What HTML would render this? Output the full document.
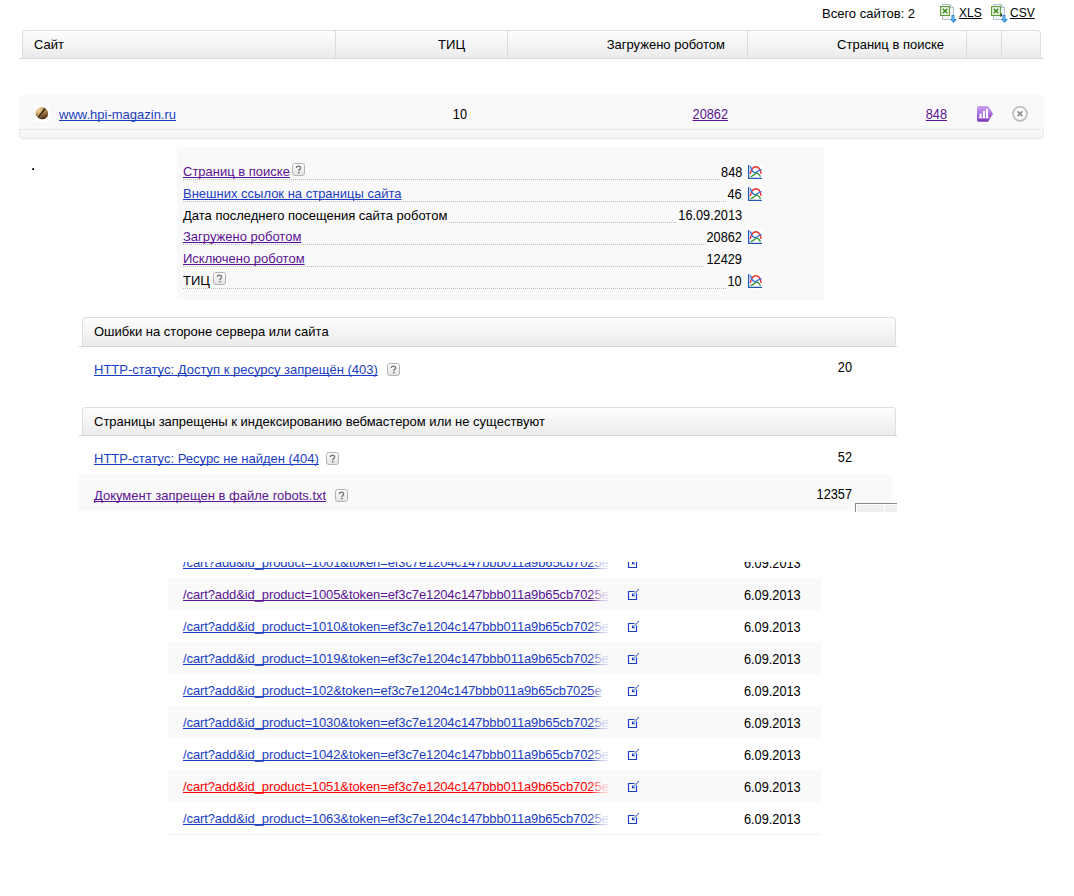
<!DOCTYPE html>
<html><head><meta charset="utf-8">
<style>
*{margin:0;padding:0;box-sizing:border-box}
html,body{width:1074px;height:896px;overflow:hidden;background:#fff}
body{position:relative;font-family:"Liberation Sans",sans-serif;font-size:13px;color:#000}
.a{position:absolute}
.t{position:absolute;line-height:15px;white-space:nowrap}
.r{text-align:right}
.d{font-size:14px;transform:scaleX(0.91);transform-origin:0 0}
.d.r{transform-origin:100% 0}
.u{text-decoration:underline;text-decoration-skip-ink:none}
.bl{color:#1a3dc1}
.pu{color:#5b1494}
.rd{color:#f00}
.hdr{position:absolute;background:linear-gradient(#fdfdfd,#ebebeb);border:1px solid #dedede;border-bottom:none;border-radius:4px 4px 0 0}
.hline{position:absolute;height:1px;background:#d3d3d3}
.dv{position:absolute;width:1px;background:#dcdcdc}
.q{position:absolute;width:13px;height:13px;border:1px solid #b9b9b9;border-radius:3px;background:linear-gradient(#fff,#e4e4e4);}
.q:after{content:"?";position:absolute;left:0;top:0;width:11px;text-align:center;font-size:9px;line-height:11px;font-weight:bold;color:#6a6a6a}
.dot{position:absolute;height:1px;background-image:linear-gradient(to right,#bdbdbd 50%,transparent 50%);background-size:2px 1px}
</style></head><body>
<div class="t " style="left:822px;top:6px;">Всего сайтов: 2</div>
<svg class="a" style="left:940px;top:3px" width="18" height="21" viewBox="0 0 18 21">
 <path d="M2.5 1.5h8l3 3v12h-11z" fill="#f1f5f7" stroke="#b5c3c8"/>
 <path d="M10.5 1.5v3h3" fill="#fff" stroke="#a9b8bf"/>
 <rect x="0.6" y="3.6" width="8.8" height="8.8" fill="#f4faf0" stroke="#5a9a32" stroke-width="1.1"/>
 <path d="M2.7 5.7l4.6 4.6M7.3 5.7l-4.6 4.6" stroke="#3f8a24" stroke-width="1.6"/>
 
 <path d="M13 12v5" stroke="#2e86d8" stroke-width="3"/>
 <path d="M10 16h7l-3.5 4z" fill="#2e86d8"/>
 <path d="M13 13v5" stroke="#7fd0ff" stroke-width="1"/>
</svg>
<div class="t u" style="left:959px;top:6px;font-size:12px">XLS</div>
<svg class="a" style="left:991px;top:3px" width="18" height="21" viewBox="0 0 18 21">
 <path d="M2.5 1.5h8l3 3v12h-11z" fill="#f1f5f7" stroke="#b5c3c8"/>
 <path d="M10.5 1.5v3h3" fill="#fff" stroke="#a9b8bf"/>
 <rect x="0.6" y="3.6" width="8.8" height="8.8" fill="#f4faf0" stroke="#5a9a32" stroke-width="1.1"/>
 <path d="M2.7 5.7l4.6 4.6M7.3 5.7l-4.6 4.6" stroke="#3f8a24" stroke-width="1.6"/>
 <path d="M10.5 10.5v1.5l-1 1.5" stroke="#222" stroke-width="1.3" fill="none"/>
 <path d="M13 12v5" stroke="#2e86d8" stroke-width="3"/>
 <path d="M10 16h7l-3.5 4z" fill="#2e86d8"/>
 <path d="M13 13v5" stroke="#7fd0ff" stroke-width="1"/>
</svg>
<div class="t u" style="left:1010px;top:6px;font-size:12px">CSV</div>
<div class="hdr" style="left:22px;top:30px;width:1019px;height:28px"></div>
<div class="a" style="left:19px;top:58px;width:1025px;height:1px;background:#d9d9d9"></div>
<div class="a" style="left:335px;top:31px;width:1px;height:27px;background:#dcdcdc"></div>
<div class="a" style="left:507px;top:31px;width:1px;height:27px;background:#dcdcdc"></div>
<div class="a" style="left:747px;top:31px;width:1px;height:27px;background:#dcdcdc"></div>
<div class="a" style="left:966px;top:31px;width:1px;height:27px;background:#dcdcdc"></div>
<div class="a" style="left:1001px;top:31px;width:1px;height:27px;background:#dcdcdc"></div>
<div class="t " style="left:34px;top:37px;">Сайт</div>
<div class="t r " style="left:65px;width:400px;top:37px;">ТИЦ</div>
<div class="t r " style="left:325px;width:400px;top:37px;">Загружено роботом</div>
<div class="t r " style="left:544px;width:400px;top:37px;">Страниц в поиске</div>
<div class="a" style="left:19px;top:95px;width:1025px;height:35px;background:#f9f9f9"></div>
<div class="a" style="left:19px;top:129px;width:1025px;height:10px;border:1px solid #e6e6e6;border-radius:0 0 4px 4px;background:linear-gradient(#f9f9f9,#f6f6f6)"></div>
<div class="a" style="left:34px;top:106px;width:16px;height:16px;background:#fff"></div>
<svg class="a" style="left:34px;top:106px" width="16" height="16" viewBox="0 0 16 16">
 <defs><radialGradient id="cg" cx="0.35" cy="0.3" r="0.75"><stop offset="0" stop-color="#f3d7a0"/><stop offset="0.6" stop-color="#c39a5c"/><stop offset="1" stop-color="#8a6535"/></radialGradient>
 <linearGradient id="cg2" x1="0" y1="0" x2="0.3" y2="1"><stop offset="0" stop-color="#d8b070"/><stop offset="0.5" stop-color="#a27a45"/><stop offset="1" stop-color="#4e3218"/></linearGradient></defs>
 <path d="M1.6 8.2C1.4 4.3 4.2 1.2 8 1.2c1.5 0 2.6 0.4 3.2 0.9L4.6 11.2C2.8 10.6 1.7 9.6 1.6 8.2z" fill="url(#cg)"/>
 <path d="M11.6 2.6c1.6 1 2.6 3 2.5 5.4-0.2 3.2-2.8 5.3-5.9 5.3-1.5 0-2.8-0.5-3.4-1.1z" fill="url(#cg2)"/>
 <path d="M10.8 3L4.6 11" stroke="#3a2614" stroke-width="1.7" stroke-linecap="round"/>
</svg>
<div class="t u bl" style="left:59px;top:107px;">www.hpi-magazin.ru</div>
<div class="t d r " style="left:67px;width:400px;top:107px;">10</div>
<div class="t d r u pu" style="left:328px;width:400px;top:107px;">20862</div>
<div class="t d r u pu" style="left:547px;width:400px;top:107px;">848</div>
<svg class="a" style="left:977px;top:106px" width="17" height="16" viewBox="0 0 17 16">
 <defs><linearGradient id="pg" x1="0" y1="0" x2="0" y2="1"><stop offset="0" stop-color="#cda3f3"/><stop offset="0.7" stop-color="#9a55d0"/><stop offset="1" stop-color="#7a32b0"/></linearGradient></defs>
 <path d="M2 0h9l5 7.8-5 8H2a2 2 0 0 1-2-2V2a2 2 0 0 1 2-2z" fill="url(#pg)"/>
 <path d="M1.5 11.8h10.5" stroke="#fff" stroke-width="1"/>
 <path d="M3.5 11.5V7.5M6.9 11.5V5M10 11.5V3" stroke="#fff" stroke-width="2.1"/>
</svg>
<svg class="a" style="left:1012px;top:106px" width="16" height="16" viewBox="0 0 16 16">
 <circle cx="8" cy="7.8" r="7" fill="#fcfcfc" stroke="#c0c0c0" stroke-width="1.8"/>
 <path d="M5.6 5.4l4.8 4.8M10.4 5.4l-4.8 4.8" stroke="#939393" stroke-width="1.8"/>
</svg>
<div class="a" style="left:32px;top:168px;width:2px;height:2px;background:radial-gradient(circle at 70% 70%,#000 30%,#999 80%)"></div>
<div class="a" style="left:177px;top:147px;width:647px;height:153px;background:#f9f9f9"></div>
<div class="dot" style="left:183px;top:179px;width:559px"></div>
<div class="dot" style="left:183px;top:201px;width:559px"></div>
<div class="dot" style="left:183px;top:222px;width:559px"></div>
<div class="dot" style="left:183px;top:244px;width:559px"></div>
<div class="dot" style="left:183px;top:266px;width:559px"></div>
<div class="dot" style="left:183px;top:288px;width:559px"></div>
<div class="t u pu" style="left:183px;top:164px;">Страниц в поиске</div>
<div class="t d r " style="left:342px;width:400px;top:165px;background:#f9f9f9;padding-left:1px;width:auto;left:auto;right:332px;height:15px">848</div>
<svg class="a" style="left:747px;top:164px" width="16" height="16" viewBox="0 0 16 16">
 <rect width="16" height="16" fill="#fff"/>
 <path d="M1.6 1v13.4H15" fill="none" stroke="#2558b5" stroke-width="1.3"/>
 <path d="M3.2 10C4 6 6 2.7 8.7 2.7c2.8 0 4.8 2.4 5.5 7.3" fill="none" stroke="#f03030" stroke-width="1.4"/>
 <path d="M3.3 2.4C4.5 6 6 8.6 7.8 8.6c2.2 0 4.2-3 6.9-3" fill="none" stroke="#2a6ae0" stroke-width="1.4"/>
 <path d="M3.5 12.6C6 12.2 8 9.3 10 9.3c1.8 0 2.8 2.2 3.6 3.4" fill="none" stroke="#3a9a3a" stroke-width="1.4"/>
</svg>
<svg class="a" style="left:292px;top:163px" width="13" height="13" viewBox="0 0 13 13"><defs><linearGradient id="qg292" x1="0" y1="0" x2="0" y2="1"><stop offset="0" stop-color="#fff"/><stop offset="1" stop-color="#e2e2e2"/></linearGradient></defs><rect x="0.5" y="0.5" width="12" height="12" rx="2.2" fill="url(#qg292)" stroke="#b4b4b4"/><path d="M4.4 5C4.4 3.8 5.3 3.1 6.5 3.1S8.6 3.8 8.6 5C8.6 6.4 6.8 6.4 6.8 8" fill="none" stroke="#707070" stroke-width="1.3"/><circle cx="6.8" cy="9.6" r="0.85" fill="#707070"/></svg>
<div class="t u bl" style="left:183px;top:186px;">Внешних ссылок на страницы сайта</div>
<div class="t d r " style="left:342px;width:400px;top:187px;background:#f9f9f9;padding-left:1px;width:auto;left:auto;right:332px;height:15px">46</div>
<svg class="a" style="left:747px;top:186px" width="16" height="16" viewBox="0 0 16 16">
 <rect width="16" height="16" fill="#fff"/>
 <path d="M1.6 1v13.4H15" fill="none" stroke="#2558b5" stroke-width="1.3"/>
 <path d="M3.2 10C4 6 6 2.7 8.7 2.7c2.8 0 4.8 2.4 5.5 7.3" fill="none" stroke="#f03030" stroke-width="1.4"/>
 <path d="M3.3 2.4C4.5 6 6 8.6 7.8 8.6c2.2 0 4.2-3 6.9-3" fill="none" stroke="#2a6ae0" stroke-width="1.4"/>
 <path d="M3.5 12.6C6 12.2 8 9.3 10 9.3c1.8 0 2.8 2.2 3.6 3.4" fill="none" stroke="#3a9a3a" stroke-width="1.4"/>
</svg>
<div class="t " style="left:183px;top:208px;background:#f9f9f9;padding-right:1px;height:16px">Дата последнего посещения сайта роботом</div>
<div class="t d r " style="left:342px;width:400px;top:208px;background:#f9f9f9;padding-left:1px;width:auto;left:auto;right:332px;height:15px">16.09.2013</div>
<div class="t u pu" style="left:183px;top:229px;">Загружено роботом</div>
<div class="t d r " style="left:342px;width:400px;top:230px;background:#f9f9f9;padding-left:1px;width:auto;left:auto;right:332px;height:15px">20862</div>
<svg class="a" style="left:747px;top:229px" width="16" height="16" viewBox="0 0 16 16">
 <rect width="16" height="16" fill="#fff"/>
 <path d="M1.6 1v13.4H15" fill="none" stroke="#2558b5" stroke-width="1.3"/>
 <path d="M3.2 10C4 6 6 2.7 8.7 2.7c2.8 0 4.8 2.4 5.5 7.3" fill="none" stroke="#f03030" stroke-width="1.4"/>
 <path d="M3.3 2.4C4.5 6 6 8.6 7.8 8.6c2.2 0 4.2-3 6.9-3" fill="none" stroke="#2a6ae0" stroke-width="1.4"/>
 <path d="M3.5 12.6C6 12.2 8 9.3 10 9.3c1.8 0 2.8 2.2 3.6 3.4" fill="none" stroke="#3a9a3a" stroke-width="1.4"/>
</svg>
<div class="t u pu" style="left:183px;top:251px;">Исключено роботом</div>
<div class="t d r " style="left:342px;width:400px;top:252px;background:#f9f9f9;padding-left:1px;width:auto;left:auto;right:332px;height:15px">12429</div>
<div class="t " style="left:183px;top:273px;">ТИЦ</div>
<div class="t d r " style="left:342px;width:400px;top:274px;background:#f9f9f9;padding-left:1px;width:auto;left:auto;right:332px;height:15px">10</div>
<svg class="a" style="left:747px;top:273px" width="16" height="16" viewBox="0 0 16 16">
 <rect width="16" height="16" fill="#fff"/>
 <path d="M1.6 1v13.4H15" fill="none" stroke="#2558b5" stroke-width="1.3"/>
 <path d="M3.2 10C4 6 6 2.7 8.7 2.7c2.8 0 4.8 2.4 5.5 7.3" fill="none" stroke="#f03030" stroke-width="1.4"/>
 <path d="M3.3 2.4C4.5 6 6 8.6 7.8 8.6c2.2 0 4.2-3 6.9-3" fill="none" stroke="#2a6ae0" stroke-width="1.4"/>
 <path d="M3.5 12.6C6 12.2 8 9.3 10 9.3c1.8 0 2.8 2.2 3.6 3.4" fill="none" stroke="#3a9a3a" stroke-width="1.4"/>
</svg>
<svg class="a" style="left:213px;top:272px" width="13" height="13" viewBox="0 0 13 13"><defs><linearGradient id="qg213" x1="0" y1="0" x2="0" y2="1"><stop offset="0" stop-color="#fff"/><stop offset="1" stop-color="#e2e2e2"/></linearGradient></defs><rect x="0.5" y="0.5" width="12" height="12" rx="2.2" fill="url(#qg213)" stroke="#b4b4b4"/><path d="M4.4 5C4.4 3.8 5.3 3.1 6.5 3.1S8.6 3.8 8.6 5C8.6 6.4 6.8 6.4 6.8 8" fill="none" stroke="#707070" stroke-width="1.3"/><circle cx="6.8" cy="9.6" r="0.85" fill="#707070"/></svg>
<div class="hdr" style="left:82px;top:317px;width:814px;height:29px"></div>
<div class="a" style="left:79px;top:346px;width:818px;height:1px;background:#d3d3d3"></div>
<div class="t " style="left:94px;top:324px;">Ошибки на стороне сервера или сайта</div>
<div class="t u bl" style="left:94px;top:362px;">HTTP-статус: Доступ к ресурсу запрещён (403)</div>
<svg class="a" style="left:387px;top:363px" width="13" height="13" viewBox="0 0 13 13"><defs><linearGradient id="qg387" x1="0" y1="0" x2="0" y2="1"><stop offset="0" stop-color="#fff"/><stop offset="1" stop-color="#e2e2e2"/></linearGradient></defs><rect x="0.5" y="0.5" width="12" height="12" rx="2.2" fill="url(#qg387)" stroke="#b4b4b4"/><path d="M4.4 5C4.4 3.8 5.3 3.1 6.5 3.1S8.6 3.8 8.6 5C8.6 6.4 6.8 6.4 6.8 8" fill="none" stroke="#707070" stroke-width="1.3"/><circle cx="6.8" cy="9.6" r="0.85" fill="#707070"/></svg>
<div class="t d r " style="left:452px;width:400px;top:360px;">20</div>
<div class="hdr" style="left:82px;top:407px;width:814px;height:28px"></div>
<div class="a" style="left:79px;top:435px;width:818px;height:1px;background:#d3d3d3"></div>
<div class="t " style="left:94px;top:414px;">Страницы запрещены к индексированию вебмастером или не существуют</div>
<div class="t u bl" style="left:94px;top:451px;">HTTP-статус: Ресурс не найден (404)</div>
<svg class="a" style="left:326px;top:452px" width="13" height="13" viewBox="0 0 13 13"><defs><linearGradient id="qg326" x1="0" y1="0" x2="0" y2="1"><stop offset="0" stop-color="#fff"/><stop offset="1" stop-color="#e2e2e2"/></linearGradient></defs><rect x="0.5" y="0.5" width="12" height="12" rx="2.2" fill="url(#qg326)" stroke="#b4b4b4"/><path d="M4.4 5C4.4 3.8 5.3 3.1 6.5 3.1S8.6 3.8 8.6 5C8.6 6.4 6.8 6.4 6.8 8" fill="none" stroke="#707070" stroke-width="1.3"/><circle cx="6.8" cy="9.6" r="0.85" fill="#707070"/></svg>
<div class="t d r " style="left:452px;width:400px;top:450px;">52</div>
<div class="a" style="left:79px;top:474px;width:813px;height:37px;background:#f9f9f9"></div>
<div class="t u pu" style="left:94px;top:488px;">Документ запрещен в файле robots.txt</div>
<svg class="a" style="left:335px;top:489px" width="13" height="13" viewBox="0 0 13 13"><defs><linearGradient id="qg335" x1="0" y1="0" x2="0" y2="1"><stop offset="0" stop-color="#fff"/><stop offset="1" stop-color="#e2e2e2"/></linearGradient></defs><rect x="0.5" y="0.5" width="12" height="12" rx="2.2" fill="url(#qg335)" stroke="#b4b4b4"/><path d="M4.4 5C4.4 3.8 5.3 3.1 6.5 3.1S8.6 3.8 8.6 5C8.6 6.4 6.8 6.4 6.8 8" fill="none" stroke="#707070" stroke-width="1.3"/><circle cx="6.8" cy="9.6" r="0.85" fill="#707070"/></svg>
<div class="t d r " style="left:452px;width:400px;top:487px;">12357</div>
<div class="a" style="left:855px;top:503px;width:42px;height:9px;border-top:1px solid #8a8a8a;border-left:1px solid #8a8a8a;background:#efefef;box-shadow:inset 1px 1px 0 #fff"></div>
<div class="a" style="left:884px;top:505px;width:1px;height:7px;background:#fff"></div>
<div class="t u bl" style="left:183px;top:555px;width:427px;overflow:hidden;letter-spacing:-0.11px">/cart?add&amp;id_product=1001&amp;token=ef3c7e1204c147bbb011a9b65cb7025e</div>
<div class="a" style="left:590px;top:554px;width:20px;height:18px;background:linear-gradient(to right,rgba(255,255,255,0),rgba(255,255,255,0.72) 55%,rgba(255,255,255,0.9) 100%)"></div>
<svg class="a" style="left:627px;top:556px" width="13" height="13" viewBox="0 0 13 13">
 <path d="M7.5 3.5H1.5v8h8V5.5" fill="none" stroke="#1a3dc1" stroke-width="1.15"/>
 <path d="M11.8 1.2L6.8 6.2" stroke="#1a3dc1" stroke-width="1.1" stroke-dasharray="1.1 0.5"/>
 <path d="M5 5v3.3h3.3z" fill="#1a3dc1"/>
</svg>
<div class="t d " style="left:744px;top:556px;">6.09.2013</div>
<div class="a" style="left:168px;top:578px;width:653px;height:32px;background:#f9f9f9"></div>
<div class="t u pu" style="left:183px;top:587px;width:427px;overflow:hidden;letter-spacing:-0.11px">/cart?add&amp;id_product=1005&amp;token=ef3c7e1204c147bbb011a9b65cb7025e</div>
<div class="a" style="left:590px;top:586px;width:20px;height:18px;background:linear-gradient(to right,rgba(249,249,249,0),rgba(249,249,249,0.72) 55%,rgba(249,249,249,0.9) 100%)"></div>
<svg class="a" style="left:627px;top:588px" width="13" height="13" viewBox="0 0 13 13">
 <path d="M7.5 3.5H1.5v8h8V5.5" fill="none" stroke="#1a3dc1" stroke-width="1.15"/>
 <path d="M11.8 1.2L6.8 6.2" stroke="#1a3dc1" stroke-width="1.1" stroke-dasharray="1.1 0.5"/>
 <path d="M5 5v3.3h3.3z" fill="#1a3dc1"/>
</svg>
<div class="t d " style="left:744px;top:588px;">6.09.2013</div>
<div class="t u bl" style="left:183px;top:619px;width:427px;overflow:hidden;letter-spacing:-0.11px">/cart?add&amp;id_product=1010&amp;token=ef3c7e1204c147bbb011a9b65cb7025e</div>
<div class="a" style="left:590px;top:618px;width:20px;height:18px;background:linear-gradient(to right,rgba(255,255,255,0),rgba(255,255,255,0.72) 55%,rgba(255,255,255,0.9) 100%)"></div>
<svg class="a" style="left:627px;top:620px" width="13" height="13" viewBox="0 0 13 13">
 <path d="M7.5 3.5H1.5v8h8V5.5" fill="none" stroke="#1a3dc1" stroke-width="1.15"/>
 <path d="M11.8 1.2L6.8 6.2" stroke="#1a3dc1" stroke-width="1.1" stroke-dasharray="1.1 0.5"/>
 <path d="M5 5v3.3h3.3z" fill="#1a3dc1"/>
</svg>
<div class="t d " style="left:744px;top:620px;">6.09.2013</div>
<div class="a" style="left:168px;top:642px;width:653px;height:32px;background:#f9f9f9"></div>
<div class="t u bl" style="left:183px;top:651px;width:427px;overflow:hidden;letter-spacing:-0.11px">/cart?add&amp;id_product=1019&amp;token=ef3c7e1204c147bbb011a9b65cb7025e</div>
<div class="a" style="left:590px;top:650px;width:20px;height:18px;background:linear-gradient(to right,rgba(249,249,249,0),rgba(249,249,249,0.72) 55%,rgba(249,249,249,0.9) 100%)"></div>
<svg class="a" style="left:627px;top:652px" width="13" height="13" viewBox="0 0 13 13">
 <path d="M7.5 3.5H1.5v8h8V5.5" fill="none" stroke="#1a3dc1" stroke-width="1.15"/>
 <path d="M11.8 1.2L6.8 6.2" stroke="#1a3dc1" stroke-width="1.1" stroke-dasharray="1.1 0.5"/>
 <path d="M5 5v3.3h3.3z" fill="#1a3dc1"/>
</svg>
<div class="t d " style="left:744px;top:652px;">6.09.2013</div>
<div class="t u bl" style="left:183px;top:683px;width:427px;overflow:hidden;letter-spacing:-0.11px">/cart?add&amp;id_product=102&amp;token=ef3c7e1204c147bbb011a9b65cb7025e</div>
<div class="a" style="left:590px;top:682px;width:20px;height:18px;background:linear-gradient(to right,rgba(255,255,255,0),rgba(255,255,255,0.72) 55%,rgba(255,255,255,0.9) 100%)"></div>
<svg class="a" style="left:627px;top:684px" width="13" height="13" viewBox="0 0 13 13">
 <path d="M7.5 3.5H1.5v8h8V5.5" fill="none" stroke="#1a3dc1" stroke-width="1.15"/>
 <path d="M11.8 1.2L6.8 6.2" stroke="#1a3dc1" stroke-width="1.1" stroke-dasharray="1.1 0.5"/>
 <path d="M5 5v3.3h3.3z" fill="#1a3dc1"/>
</svg>
<div class="t d " style="left:744px;top:684px;">6.09.2013</div>
<div class="a" style="left:168px;top:706px;width:653px;height:32px;background:#f9f9f9"></div>
<div class="t u bl" style="left:183px;top:715px;width:427px;overflow:hidden;letter-spacing:-0.11px">/cart?add&amp;id_product=1030&amp;token=ef3c7e1204c147bbb011a9b65cb7025e</div>
<div class="a" style="left:590px;top:714px;width:20px;height:18px;background:linear-gradient(to right,rgba(249,249,249,0),rgba(249,249,249,0.72) 55%,rgba(249,249,249,0.9) 100%)"></div>
<svg class="a" style="left:627px;top:716px" width="13" height="13" viewBox="0 0 13 13">
 <path d="M7.5 3.5H1.5v8h8V5.5" fill="none" stroke="#1a3dc1" stroke-width="1.15"/>
 <path d="M11.8 1.2L6.8 6.2" stroke="#1a3dc1" stroke-width="1.1" stroke-dasharray="1.1 0.5"/>
 <path d="M5 5v3.3h3.3z" fill="#1a3dc1"/>
</svg>
<div class="t d " style="left:744px;top:716px;">6.09.2013</div>
<div class="t u bl" style="left:183px;top:747px;width:427px;overflow:hidden;letter-spacing:-0.11px">/cart?add&amp;id_product=1042&amp;token=ef3c7e1204c147bbb011a9b65cb7025e</div>
<div class="a" style="left:590px;top:746px;width:20px;height:18px;background:linear-gradient(to right,rgba(255,255,255,0),rgba(255,255,255,0.72) 55%,rgba(255,255,255,0.9) 100%)"></div>
<svg class="a" style="left:627px;top:748px" width="13" height="13" viewBox="0 0 13 13">
 <path d="M7.5 3.5H1.5v8h8V5.5" fill="none" stroke="#1a3dc1" stroke-width="1.15"/>
 <path d="M11.8 1.2L6.8 6.2" stroke="#1a3dc1" stroke-width="1.1" stroke-dasharray="1.1 0.5"/>
 <path d="M5 5v3.3h3.3z" fill="#1a3dc1"/>
</svg>
<div class="t d " style="left:744px;top:748px;">6.09.2013</div>
<div class="a" style="left:168px;top:770px;width:653px;height:32px;background:#f9f9f9"></div>
<div class="t u rd" style="left:183px;top:779px;width:427px;overflow:hidden;letter-spacing:-0.11px">/cart?add&amp;id_product=1051&amp;token=ef3c7e1204c147bbb011a9b65cb7025e</div>
<div class="a" style="left:590px;top:778px;width:20px;height:18px;background:linear-gradient(to right,rgba(249,249,249,0),rgba(249,249,249,0.72) 55%,rgba(249,249,249,0.9) 100%)"></div>
<svg class="a" style="left:627px;top:780px" width="13" height="13" viewBox="0 0 13 13">
 <path d="M7.5 3.5H1.5v8h8V5.5" fill="none" stroke="#1a3dc1" stroke-width="1.15"/>
 <path d="M11.8 1.2L6.8 6.2" stroke="#1a3dc1" stroke-width="1.1" stroke-dasharray="1.1 0.5"/>
 <path d="M5 5v3.3h3.3z" fill="#1a3dc1"/>
</svg>
<div class="t d " style="left:744px;top:780px;">6.09.2013</div>
<div class="t u bl" style="left:183px;top:811px;width:427px;overflow:hidden;letter-spacing:-0.11px">/cart?add&amp;id_product=1063&amp;token=ef3c7e1204c147bbb011a9b65cb7025e</div>
<div class="a" style="left:590px;top:810px;width:20px;height:18px;background:linear-gradient(to right,rgba(255,255,255,0),rgba(255,255,255,0.72) 55%,rgba(255,255,255,0.9) 100%)"></div>
<svg class="a" style="left:627px;top:812px" width="13" height="13" viewBox="0 0 13 13">
 <path d="M7.5 3.5H1.5v8h8V5.5" fill="none" stroke="#1a3dc1" stroke-width="1.15"/>
 <path d="M11.8 1.2L6.8 6.2" stroke="#1a3dc1" stroke-width="1.1" stroke-dasharray="1.1 0.5"/>
 <path d="M5 5v3.3h3.3z" fill="#1a3dc1"/>
</svg>
<div class="t d " style="left:744px;top:812px;">6.09.2013</div>
<div class="a" style="left:168px;top:834px;width:653px;height:1px;background:#f0f0f0"></div>
<div class="a" style="left:0px;top:520px;width:1074px;height:42px;background:#fff"></div>
</body></html>
